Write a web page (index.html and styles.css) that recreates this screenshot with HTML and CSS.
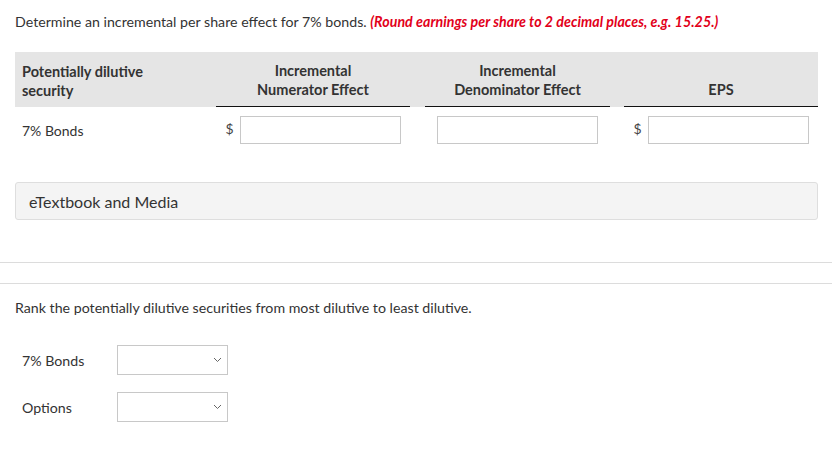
FILE: index.html
```html
<!DOCTYPE html>
<html>
<head>
<meta charset="utf-8">
<link rel="stylesheet" href="styles.css">
</head>
<body>
<div class="section">
  <p class="prompt">Determine an incremental per share effect for 7% bonds. <em class="note">(Round earnings per share to 2 decimal places, e.g. 15.25.)</em></p>

  <div class="grid head">
    <div class="hcell first">Potentially dilutive<br>security</div>
    <div class="hcell col2 ruled">Incremental<br>Numerator Effect</div>
    <div class="hcell col3 ruled">Incremental<br>Denominator Effect</div>
    <div class="hcell ruled">EPS</div>
  </div>
  <div class="grid row">
    <div class="rlabel">7% Bonds</div>
    <div class="rcell col2"><span class="cur">$</span><input class="field" type="text"></div>
    <div class="rcell col3"><input class="field" type="text"></div>
    <div class="rcell"><span class="cur">$</span><input class="field" type="text"></div>
  </div>

  <div class="media">eTextbook and Media</div>
</div>

<div class="sep one"></div>
<div class="sep two"></div>

<div class="section">
  <p class="prompt rank">Rank the potentially dilutive securities from most dilutive to least dilutive.</p>
  <div class="rankrow">
    <span class="rlabel">7% Bonds</span>
    <div class="selwrap">
      <select class="sel"><option></option></select>
      <svg class="chev" width="9" height="6" viewBox="0 0 9 6"><path d="M1 1 L4.5 4.5 L8 1" fill="none" stroke="#666" stroke-width="1"/></svg>
    </div>
  </div>
  <div class="rankrow second">
    <span class="rlabel">Options</span>
    <div class="selwrap">
      <select class="sel"><option></option></select>
      <svg class="chev" width="9" height="6" viewBox="0 0 9 6"><path d="M1 1 L4.5 4.5 L8 1" fill="none" stroke="#666" stroke-width="1"/></svg>
    </div>
  </div>
</div>
</body>
</html>
```

FILE: styles.css
```css
html, body {
  margin: 0;
  padding: 0;
  background: #fff;
}
body {
  font-family: Lato, "Liberation Sans", sans-serif;
  color: #333;
  font-size: 14px;
}
.section {
  padding: 0 14px 0 15px;
}
.prompt {
  margin: 0;
  padding-top: 12px;
  line-height: 20px;
  font-size: 14.2px;
  color: #333;
}
.note {
  color: #e2001a;
  font-weight: 700;
  font-style: italic;
  letter-spacing: 0.05px;
}
.grid {
  display: grid;
  grid-template-columns: 201px 209px 199px 194px;
  width: 803px;
}
.head {
  margin-top: 20px;
  background: #e5e5e5;
  padding-top: 9px;
}
.hcell {
  font-weight: 700;
  font-size: 14.5px;
  line-height: 19px;
  text-align: center;
  padding-bottom: 7px;
  display: flex;
  align-items: flex-end;
  justify-content: center;
  color: #333;
}
.hcell.first {
  justify-content: flex-start;
  text-align: left;
  padding-left: 7px;
}
.ruled {
  border-bottom: 1px solid #111;
}
.col2 {
  margin-right: 15px;
}
.col3 {
  margin-right: 14px;
}
.row {
  padding-top: 9px;
  height: 28px;
}
.rlabel {
  font-size: 14px;
  padding-left: 7px;
  display: flex;
  align-items: center;
  color: #333;
}
.rcell {
  display: flex;
  align-items: center;
  justify-content: center;
  gap: 6px;
}
.cur {
  font-size: 14px;
  color: #444;
  margin-top: -4px;
}
.field {
  width: 161px;
  height: 28px;
  box-sizing: border-box;
  border: 1px solid #c8c8c8;
  border-radius: 0;
  margin: 0;
  padding: 0 4px;
  background: #fff;
}
.media {
  margin-top: 38px;
  width: 803px;
  height: 38px;
  box-sizing: border-box;
  background: #f4f4f4;
  border: 1px solid #dedede;
  border-radius: 3px;
  display: flex;
  align-items: center;
  padding-left: 13px;
  font-size: 16px;
  color: #333;
}
.sep {
  height: 0;
  border-top: 1px solid #dcdcdc;
}
.sep.one {
  margin-top: 42px;
}
.sep.two {
  margin-top: 20px;
}
.prompt.rank {
  padding-top: 14px;
}
.rankrow {
  display: flex;
  align-items: center;
  margin-top: 27px;
  height: 30px;
}
.rankrow.second {
  margin-top: 17px;
}
.rankrow .rlabel {
  width: 95px;
  font-size: 14.2px;
}
.selwrap {
  position: relative;
  width: 111px;
  height: 30px;
}
.sel {
  appearance: none;
  -webkit-appearance: none;
  width: 111px;
  height: 30px;
  box-sizing: border-box;
  border: 1px solid #c8c8c8;
  border-radius: 0;
  background: #fff;
  margin: 0;
}
.chev {
  position: absolute;
  right: 6px;
  top: 12px;
}
```
